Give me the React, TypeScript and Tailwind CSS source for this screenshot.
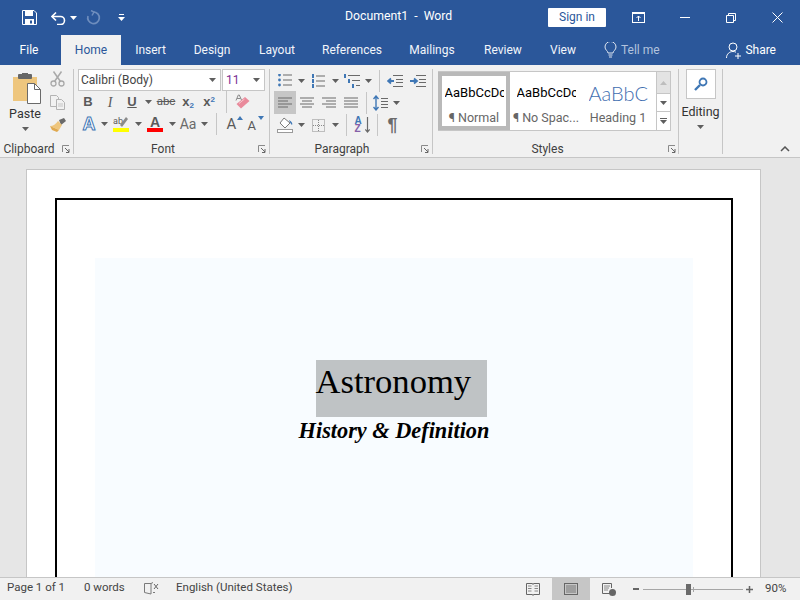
import React from 'react';

const Caret: React.FC<{ color?: string; className?: string }> = ({ color = '#5f5f5f', className = '' }) => (
  <svg width="7" height="4" viewBox="0 0 7 4" className={className}><path d="M0 0h7L3.5 4z" fill={color} /></svg>
);

const Launcher: React.FC = () => (
  <svg width="8" height="8" viewBox="0 0 8 8" className="shrink-0">
    <path d="M.5 7V.5H7" fill="none" stroke="#8a8a8a" />
    <path d="M3 3l4 4M7 4v3.500H4" fill="none" stroke="#666" />
  </svg>
);

const Lines: React.FC<{ rows: [number, number][] }> = ({ rows }) => (
  <svg width="16" height="12" viewBox="0 0 16 12">
    {rows.map(([a, b], i) => <rect key={i} x={a} y={i * 3 + 0.5} width={b - a} height="1" fill="#6a6a6a" />)}
  </svg>
);

const Sep: React.FC<{ h?: string }> = ({ h = 'h-[22px]' }) => <div className={`w-px ${h} bg-[#c6c6c6] shrink-0`} />;

// fixed-size cell for one ribbon tool, keeps the rows lined up
const Cell: React.FC<{ w: string; children?: React.ReactNode; className?: string }> = ({ w, children, className = '' }) => (
  <div className={`${w} h-full flex items-center justify-center shrink-0 ${className}`}>{children}</div>
);

const GroupLabel: React.FC<{ label: string; spanClass?: string; className?: string }> = ({ label, spanClass = '', className = '' }) => (
  <div className={`h-[10px] flex items-center text-[12px] leading-none text-[#3f3f3f] ${className}`}>
    <span className={`flex-1 text-center ${spanClass}`}>{label}</span>
    <Launcher />
  </div>
);

const BigA: React.FC<{ up?: boolean }> = ({ up }) => (
  <div className="relative w-[16px] h-[16px]">
    <span className={`absolute left-0 bottom-0 leading-none text-[#5a5a5a] ${up ? 'text-[15px]' : 'text-[13px]'}`}>A</span>
    <svg width="6" height="4" viewBox="0 0 6 4" className="absolute right-0 top-0"><path d={up ? 'M0 4h6L3 0z' : 'M0 0h6L3 4z'} fill="#3f77b5" /></svg>
  </div>
);

const tabs = [
  { label: 'Insert', w: 'w-[59px]' },
  { label: 'Design', w: 'w-[64px]' },
  { label: 'Layout', w: 'w-[66px]' },
  { label: 'References', w: 'w-[84px]' },
  { label: 'Mailings', w: 'w-[76px]' },
  { label: 'Review', w: 'w-[66px]' },
  { label: 'View', w: 'w-[54px]' },
];

const TitleBar: React.FC = () => (
  <div className="h-[35px] bg-[#2b579a] flex items-center text-white shrink-0 relative">
    <div className="w-[22px]" />
    <svg width="15" height="15" viewBox="0 0 15 15">
      <path d="M.5.5h11.500l2.500 2.500v11.500H.5z" fill="none" stroke="#fff" />
      <rect x="3" y="1" width="8" height="5" fill="#fff" />
      <rect x="3" y="9" width="9" height="5.500" fill="#fff" />
      <rect x="8" y="10.500" width="2" height="3" fill="#2b579a" />
    </svg>
    <div className="w-[14px]" />
    <svg width="15" height="14" viewBox="0 0 15 14">
      <path d="M1 5.500h8.500a4 4 0 0 1 0 8H6" fill="none" stroke="#fff" strokeWidth="1.600" />
      <path d="M5 1.500L1 5.500l4 4" fill="none" stroke="#fff" strokeWidth="1.600" />
    </svg>
    <Caret color="#fff" className="ml-[4px]" />
    <div className="w-[9px]" />
    <svg width="15" height="15" viewBox="0 0 15 15">
      <path d="M7.500 2a5.800 5.800 0 1 1-5.500 4" fill="none" stroke="#6e8dbd" strokeWidth="1.700" />
      <path d="M5 .5l3 1.500-2 3.500" fill="none" stroke="#6e8dbd" strokeWidth="1.500" />
    </svg>
    <div className="w-[17px]" />
    <svg width="7" height="7" viewBox="0 0 7 7"><rect x="1" width="5" height="1" fill="#fff" /><path d="M0 3h7L3.500 7z" fill="#fff" /></svg>
    <div className="absolute left-[345px] top-[8px] text-[12.250px] leading-[16px] whitespace-pre">Document1  -  Word</div>
    <div className="ml-auto flex items-center h-full">
      <div className="w-[58px] h-[19px] bg-white rounded-[1px] text-[#2b579a] text-[12px] leading-[19px] text-center">Sign in</div>
      <div className="w-[26px]" />
      <svg width="13" height="11" viewBox="0 0 13 11">
        <rect x=".5" y=".5" width="12" height="10" fill="none" stroke="#fff" />
        <rect x="1" y="1" width="11" height="1" fill="#fff" />
        <path d="M6.500 9V4M4.500 6l2-2 2 2" fill="none" stroke="#fff" />
      </svg>
      <div className="w-[35px]" />
      <div className="w-[10px] h-px bg-white" />
      <div className="w-[36px]" />
      <svg width="10" height="10" viewBox="0 0 10 10">
        <path d="M.5 2.500h7v7h-7zM2.500 2.500v-2h7v7h-2" fill="none" stroke="#fff" />
      </svg>
      <div className="w-[36px]" />
      <svg width="11" height="11" viewBox="0 0 11 11"><path d="M.5.5l10 10M10.500.5l-10 10" stroke="#fff" /></svg>
      <div className="w-[17px]" />
    </div>
  </div>
);

const TabBar: React.FC = () => (
  <div className="h-[30px] bg-[#2b579a] flex text-white text-[12px] shrink-0">
    <div className="w-[61px] pr-[3px] text-center leading-[30px]">File</div>
    <div className="w-[60px] bg-[#f1f1f1] text-[#2b579a] text-center leading-[30px]">Home</div>
    {tabs.map((t) => (
      <div key={t.label} className={`${t.w} text-center leading-[30px] text-[#f2f5fa]`}>{t.label}</div>
    ))}
    <div className="w-[14px]" />
    <div className="flex items-center">
      <svg width="13" height="16" viewBox="0 0 13 16">
        <path d="M4 11c0-2-3-3-3-6a5.500 5.500 0 0 1 11 0c0 3-3 4-3 6z" fill="none" stroke="#dfe6f1" />
        <path d="M4.500 13h4M5 15h3" stroke="#dfe6f1" />
      </svg>
      <span className="ml-[4px] text-[#b3c3dd]">Tell me</span>
    </div>
    <div className="ml-auto flex items-center pr-[24px]">
      <svg width="16" height="17" viewBox="0 0 16 17">
        <circle cx="7" cy="5" r="4" fill="none" stroke="#fff" />
        <path d="M.5 16c0-4 3-6.500 6.500-6.500 1 0 2 .2 3 .7" fill="none" stroke="#fff" />
        <path d="M12 11v6M9 14h6" stroke="#fff" />
      </svg>
      <span className="ml-[3px]">Share</span>
    </div>
  </div>
);

const Clipboard: React.FC = () => (
  <div className="w-[74px] shrink-0 border-r border-[#c6c6c6] flex flex-col">
    <div className="flex-1 flex">
      <div className="w-[50px] flex flex-col items-center pt-[4px]">
        <svg width="28" height="31" viewBox="0 0 28 31" className="ml-[4px]">
          <path d="M0 4h24v22H14v2H0z" fill="#eec67e" />
          <rect x="5" y="1" width="14" height="5" rx="1" fill="#666" />
          <rect x="9" y="0" width="6" height="3" fill="#666" />
          <path d="M14.500 10.500h7l6 6V30.500h-13z" fill="#fff" stroke="#6a6a6a" />
          <path d="M21.500 10.500v6h6" fill="none" stroke="#6a6a6a" />
        </svg>
        <div className="text-[12.5px] leading-[16px] mt-[2px] text-[#333]">Paste</div>
        <Caret className="mt-[5px]" />
      </div>
      <div className="flex flex-col items-start pt-[2px] gap-[8px]">
        <svg width="15" height="16" viewBox="0 0 15 16">
          <circle cx="3.500" cy="12.500" r="2.500" fill="none" stroke="#a9a9a9" strokeWidth="1.300" />
          <circle cx="11.500" cy="12.500" r="2.500" fill="none" stroke="#a9a9a9" strokeWidth="1.300" />
          <path d="M10.500 10.500L3.500.5M4.500 10.500l7-10" stroke="#a9a9a9" strokeWidth="1.500" />
        </svg>
        <svg width="15" height="15" viewBox="0 0 15 15">
          <path d="M.5.5h6l2 2v9H.5z" fill="#f1f1f1" stroke="#b3b3b3" />
          <path d="M6.500 4.500h5l3 3v7h-8z" fill="#f1f1f1" stroke="#b3b3b3" />
          <path d="M8 9h5M8 11h5" stroke="#c5c5c5" />
        </svg>
        <svg width="16" height="15" viewBox="0 0 16 15">
          <path d="M9 2l5-2 2 3-5 4z" fill="#6a6a6a" />
          <path d="M8 3l4 4-3 5-9-4c3 0 6-2 8-5z" fill="#eec67e" />
          <path d="M0 8l9 4-2 2-5-2z" fill="#e0a94f" />
        </svg>
      </div>
    </div>
    <GroupLabel label="Clipboard" spanClass="pr-[4px]" className="pr-[3px]" />
  </div>
);

const Font: React.FC = () => (
  <div className="w-[196px] shrink-0 border-r border-[#c6c6c6] flex flex-col pl-[4px]">
    <div className="flex-1 flex flex-col">
      <div className="h-[22px] flex gap-px text-[12px] leading-none">
        <div className="w-[143px] border border-[#c6c6c6] bg-white flex items-center px-[2px] text-[#444]">
          <span className="flex-1">Calibri (Body)</span>
          <Caret className="mr-[2px]" />
        </div>
        <div className="w-[43px] border border-[#c6c6c6] bg-white flex items-center px-[3px] text-[#7a2f92]">
          <span className="flex-1">11</span>
          <Caret className="mr-[1px]" />
        </div>
      </div>
      <div className="h-[22px] flex items-center text-[#5a5a5a]">
        <Cell w="w-[20px]"><span className="font-['Liberation_Sans'] font-bold text-[13px]">B</span></Cell>
        <Cell w="w-[24px]"><span className="font-['Liberation_Serif'] italic text-[14px]">I</span></Cell>
        <Cell w="w-[20px]"><span className="font-['Liberation_Sans'] font-bold text-[13px] underline">U</span></Cell>
        <Cell w="w-[12px]"><Caret /></Cell>
        <Cell w="w-[24px]"><span className="text-[11.5px] line-through">abc</span></Cell>
        <Cell w="w-[20px]"><span className="font-['Liberation_Sans'] font-bold text-[13px]">x<sub className="text-[8px] text-[#3f77b5]">2</sub></span></Cell>
        <Cell w="w-[22px]"><span className="font-['Liberation_Sans'] font-bold text-[13px]">x<sup className="text-[8px] text-[#3f77b5]">2</sup></span></Cell>
        <Cell w="w-[6px]" />
        <Sep />
        <Cell w="w-[30px]">
          <svg width="15" height="16" viewBox="0 0 15 16">
            <path d="M1.500 10L10 3l4.500 4L6 14.500z" fill="#e98a9b" />
            <path d="M4 9.500L9.500 5" stroke="#f6c8d0" />
            <path d="M1 6.500L3.300 1h1L6.500 6M2 4.500h3.500" fill="none" stroke="#8a8a8a" />
          </svg>
        </Cell>
      </div>
      <div className="h-[22px] flex items-center">
        <Cell w="w-[22px]"><span className="font-['Liberation_Sans'] font-bold text-[18px] text-white [-webkit-text-stroke:1px_#3f77b5]">A</span></Cell>
        <Cell w="w-[8px]"><Caret /></Cell>
        <Cell w="w-[26px]">
          <div className="flex flex-col items-center">
            <svg width="16" height="12" viewBox="0 0 16 12">
              <text x="0" y="8" fontSize="9" fill="#5a5a5a" fontFamily="Roboto">ab</text>
              <path d="M9 11l6-8-2-2-6 8z" fill="#8a8a8a" />
            </svg>
            <div className="w-[16px] h-[4px] bg-[#ffff00]" />
          </div>
        </Cell>
        <Cell w="w-[8px]"><Caret /></Cell>
        <Cell w="w-[26px]">
          <div className="flex flex-col items-center">
            <span className="font-['Liberation_Sans'] font-bold text-[14px] leading-[12px] text-[#5a5a5a]">A</span>
            <div className="w-[16px] h-[4px] bg-[#ff0000]" />
          </div>
        </Cell>
        <Cell w="w-[8px]"><Caret /></Cell>
        <Cell w="w-[24px]"><span className="text-[14px] text-[#6a6a6a]">Aa</span></Cell>
        <Cell w="w-[8px]"><Caret /></Cell>
        <Cell w="w-[8px]" />
        <Sep />
        <Cell w="w-[9px]" />
        <Cell w="w-[17px]"><BigA up /></Cell>
        <Cell w="w-[4px]" />
        <Cell w="w-[17px]"><BigA /></Cell>
      </div>
    </div>
    <GroupLabel label="Font" spanClass="pr-[10px]" className="pr-[3px]" />
  </div>
);

const Paragraph: React.FC = () => (
  <div className="w-[163px] shrink-0 border-r border-[#c6c6c6] flex flex-col pl-[4px]">
    <div className="flex-1 flex flex-col">
      <div className="h-[21px] mt-[1px] flex items-center">
        <Cell w="w-[22px]">
          <svg width="14" height="13" viewBox="0 0 14 13">
            {[1, 6, 11].map((y) => <g key={y}><circle cx="1.500" cy={y} r="1.400" fill="#3f77b5" /><rect x="5" y={y - 0.5} width="9" height="1" fill="#6a6a6a" /></g>)}
          </svg>
        </Cell>
        <Cell w="w-[10px]"><Caret /></Cell>
        <Cell w="w-[24px]">
          <svg width="14" height="14" viewBox="0 0 14 14">
            {[2, 7, 12].map((y) => <g key={y}><rect x="1" y={y - 2} width="2" height="4" fill="#3f77b5" /><rect x="5" y={y - 0.5} width="9" height="1" fill="#6a6a6a" /></g>)}
          </svg>
        </Cell>
        <Cell w="w-[10px]"><Caret /></Cell>
        <Cell w="w-[24px]">
          <svg width="16" height="14" viewBox="0 0 16 14">
            <rect x="0" y="0" width="2" height="4" fill="#3f77b5" /><rect x="4" y="1" width="12" height="1" fill="#6a6a6a" />
            <rect x="4" y="5" width="2" height="4" fill="#3f77b5" /><rect x="8" y="6" width="8" height="1" fill="#6a6a6a" />
            <rect x="8" y="10" width="2" height="4" fill="#3f77b5" /><rect x="12" y="11" width="4" height="1" fill="#6a6a6a" />
          </svg>
        </Cell>
        <Cell w="w-[9px]"><Caret /></Cell>
        <Cell w="w-[6px]" />
        <Sep />
        <Cell w="w-[29px]">
          <svg width="16" height="12" viewBox="0 0 16 12">
            <path d="M6 .5h10M9 4.500h7M9 7.500h7M6 11.500h10" stroke="#6a6a6a" />
            <path d="M7 6H2M4 3.500L1 6l3 2.500" fill="none" stroke="#3f77b5" strokeWidth="1.800" />
          </svg>
        </Cell>
        <Cell w="w-[17px]">
          <svg width="16" height="12" viewBox="0 0 16 12">
            <path d="M6 .5h10M9 4.500h7M9 7.500h7M6 11.500h10" stroke="#6a6a6a" />
            <path d="M0 6h6M4 3.500L7 6 4 8.500" fill="none" stroke="#3f77b5" strokeWidth="1.800" />
          </svg>
        </Cell>
      </div>
      <div className="h-[23px] flex items-center">
        <Cell w="w-[22px]" className="bg-[#c6c6c6]"><Lines rows={[[1, 15], [1, 11], [1, 15], [1, 11]]} /></Cell>
        <Cell w="w-[22px]"><Lines rows={[[1, 15], [3, 13], [1, 15], [3, 13]]} /></Cell>
        <Cell w="w-[22px]"><Lines rows={[[1, 15], [5, 15], [1, 15], [5, 15]]} /></Cell>
        <Cell w="w-[22px]"><Lines rows={[[1, 15], [1, 15], [1, 15], [1, 15]]} /></Cell>
        <Cell w="w-[4px]" />
        <Sep />
        <Cell w="w-[26px]">
          <svg width="15" height="16" viewBox="0 0 15 16">
            <path d="M3 1v14M.5 4L3 1l2.500 3M.5 12L3 15l2.500-3" fill="none" stroke="#3f77b5" strokeWidth="1.400" />
            <path d="M8 3.500h7M8 6.500h7M8 9.500h7M8 12.500h7" stroke="#6a6a6a" />
          </svg>
        </Cell>
        <Caret />
      </div>
      <div className="h-[22px] flex items-center">
        <Cell w="w-[22px]">
          <svg width="16" height="16" viewBox="0 0 16 16">
            <path d="M7 1l6 5-5 5-5-5z" fill="#fff" stroke="#7a7a7a" />
            <path d="M12 3c2 1 4 3 3 5-1-1-2-2-3-5z" fill="#3f77b5" />
            <rect x=".5" y="12.500" width="15" height="3" fill="#fff" stroke="#9a9a9a" />
          </svg>
        </Cell>
        <Cell w="w-[10px]"><Caret /></Cell>
        <Cell w="w-[24px]">
          <svg width="13" height="13" viewBox="0 0 13 13">
            <rect x=".5" y=".5" width="12" height="12" fill="none" stroke="#8a8a8a" strokeDasharray="1 1" />
            <path d="M6.500 1v11M1 6.500h11" stroke="#8a8a8a" strokeDasharray="1 1" />
          </svg>
        </Cell>
        <Cell w="w-[10px]"><Caret /></Cell>
        <Cell w="w-[6px]" />
        <Sep />
        <Cell w="w-[30px]">
          <div className="relative w-[15px] h-[17px] font-['Liberation_Sans'] font-bold text-[10px] leading-[8.500px]">
            <div className="text-[#3f77b5]">A</div>
            <div className="text-[#8560a8]">Z</div>
            <svg width="5" height="16" viewBox="0 0 5 16" className="absolute right-0 top-0"><path d="M2.500 0v15M.3 12.500l2.200 2.500 2.200-2.500" fill="none" stroke="#6a6a6a" strokeWidth="1.200" /></svg>
          </div>
        </Cell>
        <Sep />
        <Cell w="w-[29px]"><span className="font-['Liberation_Sans'] font-bold text-[18px] text-[#6a6a6a]">¶</span></Cell>
      </div>
    </div>
    <GroupLabel label="Paragraph" spanClass="pr-[11px]" className="pr-[3px]" />
  </div>
);

const StyleItem: React.FC<{ sample: string; name: string; heading?: boolean; className?: string }> = ({ sample, name, heading, className = '' }) => (
  <div className={`h-full flex flex-col items-center overflow-hidden ${className}`}>
    <div className={`h-[32px] w-[59px] overflow-hidden whitespace-nowrap leading-[32px] ${heading ? "font-['Lato'] font-light text-[20px] text-[#3f6eb0]" : "text-[13px] text-black"}`}>{sample}</div>
    <div className="mt-[2px] text-[12.5px] leading-[14px] text-[#666] whitespace-nowrap">{name}</div>
  </div>
);

const Styles: React.FC = () => (
  <div className="w-[246px] shrink-0 border-r border-[#c6c6c6] flex flex-col pl-[5px]">
    <div className="flex-1 pt-[2px]">
      <div className="w-[233px] h-[60px] border border-[#c6c6c6] bg-white flex">
        <div className="w-[72px] h-full -ml-px border-[4px] border-[#b9b9b9] flex justify-center pt-px">
          <StyleItem sample="AaBbCcDc" name="¶ Normal" />
        </div>
        <StyleItem sample="AaBbCcDc" name="¶ No Spac..." className="w-[72px] pt-[5px]" />
        <StyleItem sample="AaBbCc" name="Heading 1" heading className="w-[72px] pt-[5px]" />
        <div className="ml-auto w-[14px] border-l border-[#c6c6c6] flex flex-col">
          <div className="h-[21px] bg-[#e3e3e3] flex items-center justify-center"><svg width="7" height="4" viewBox="0 0 7 4"><path d="M0 4h7L3.500 0z" fill="#bdbdbd" /></svg></div>
          <div className="h-[19px] border-y border-[#c6c6c6] flex items-center justify-center"><Caret /></div>
          <div className="flex-1 flex flex-col items-center justify-center gap-px"><div className="w-[7px] h-px bg-[#5f5f5f]" /><Caret /></div>
        </div>
      </div>
    </div>
    <GroupLabel label="Styles" spanClass="pr-[10px]" className="pr-[2px] -ml-px" />
  </div>
);

const Editing: React.FC = () => (
  <div className="w-[44px] shrink-0 border-r border-[#c6c6c6] flex flex-col items-center">
    <div className="w-[30px] h-[30px] border border-[#c6c6c6] bg-white flex items-center justify-center">
      <svg width="14" height="14" viewBox="0 0 14 14">
        <circle cx="9" cy="5" r="3.500" fill="none" stroke="#3f77b5" strokeWidth="1.800" />
        <path d="M6 8l-5 5" stroke="#3f77b5" strokeWidth="2.400" />
      </svg>
    </div>
    <div className="text-[12.5px] leading-[16px] mt-[5px] text-[#333]">Editing</div>
    <Caret className="mt-[5px]" />
  </div>
);

const Ribbon: React.FC = () => (
  <div className="h-[93px] bg-[#f1f1f1] border-b border-[#c6c6c6] flex pt-[4px] pb-[3px] shrink-0 relative">
    <Clipboard />
    <Font />
    <Paragraph />
    <Styles />
    <Editing />
    <svg width="10" height="6" viewBox="0 0 10 6" className="absolute left-[780px] top-[81px]"><path d="M1 5l4-4 4 4" fill="none" stroke="#555" strokeWidth="1.500" /></svg>
  </div>
);

const Workspace: React.FC = () => (
  <div className="flex-1 min-h-0 bg-[#e6e6e6] overflow-hidden pt-[11px] pl-[26px]">
    <div className="w-[735px] h-[500px] bg-white border border-[#c6c6c6] pt-[28px] pl-[28px]">
      <div className="w-[678px] h-[460px] border-2 border-black pt-[58px] pl-[38px]">
        <div className="w-[598px] h-[400px] bg-[#f8fcff] pt-[102px] flex flex-col items-center font-['Liberation_Serif']">
          <div className="ml-[14px] bg-[#bfc3c5] w-[171px] h-[57px] text-left text-[34.600px] leading-[42px] text-black whitespace-nowrap">Astronomy</div>
          <div className="text-[22.300px] leading-[28px] font-bold italic text-black whitespace-nowrap">History &amp; Definition</div>
        </div>
      </div>
    </div>
  </div>
);

const StatusBar: React.FC = () => (
  <div className="h-[23px] bg-[#f1f1f1] border-t border-[#c6c6c6] flex items-center text-[11.5px] text-[#444] shrink-0">
    <div className="flex items-center pb-[2px]">
      <span className="ml-[7px] w-[77px]">Page 1 of 1</span>
      <span className="w-[60px]">0 words</span>
      <svg width="15" height="13" viewBox="0 0 15 13">
        <path d="M7 1.500H.5v9l6.500 1.500V1.500L9 .5M11 10.500H9" fill="none" stroke="#7a7a7a" />
        <path d="M10 2l4 5M14 2l-4 5" stroke="#666" />
      </svg>
      <span className="ml-[17px]">English (United States)</span>
    </div>
    <div className="ml-auto flex items-center h-full">
      <svg width="14" height="13" viewBox="0 0 14 13">
        <path d="M.5.5h6l.5 1 .5-1h6v11h-6l-.5 1-.5-1h-6z" fill="none" stroke="#666" />
        <path d="M2 3h3.500M2 5.500h3.500M2 8h3.500M8.500 3H12M8.500 5.500H12M8.500 8H12" stroke="#888" />
      </svg>
      <div className="w-[12px]" />
      <div className="w-[38px] h-full bg-[#c6c6c6] flex items-center justify-center">
        <svg width="14" height="12" viewBox="0 0 14 12">
          <rect x=".5" y=".5" width="13" height="11" fill="none" stroke="#666" />
          <path d="M2 3h10M2 5h10M2 7h10M2 9h10" stroke="#777" />
        </svg>
      </div>
      <div className="w-[12px]" />
      <svg width="14" height="13" viewBox="0 0 14 13">
        <path d="M8 10.500H.5V.5h9V5" fill="none" stroke="#666" />
        <path d="M2 3h6M2 5h5M2 7h4" stroke="#888" />
        <circle cx="10.500" cy="9.500" r="3.500" fill="#666" />
      </svg>
      <div className="w-[17px]" />
      <div className="w-[6px] h-[2px] bg-[#666]" />
      <div className="w-[4px]" />
      <div className="relative w-[100px] h-px bg-[#a6a6a6]">
        <div className="absolute left-[43px] -top-[5px] w-[5px] h-[11px] bg-[#6a6a6a]" />
        <div className="absolute left-[50px] -top-[2px] w-px h-[5px] bg-[#a6a6a6]" />
      </div>
      <div className="w-[3px]" />
      <svg width="7" height="7" viewBox="0 0 7 7"><path d="M3.500 0v7M0 3.500h7" stroke="#666" strokeWidth="1.500" /></svg>
      <span className="ml-[12px] w-[35px]">90%</span>
    </div>
  </div>
);

const App: React.FC = () => (
  <div className="w-[800px] h-[600px] overflow-hidden flex flex-col font-['Roboto',sans-serif]">
    <TitleBar />
    <TabBar />
    <Ribbon />
    <Workspace />
    <StatusBar />
  </div>
);

export default App;
